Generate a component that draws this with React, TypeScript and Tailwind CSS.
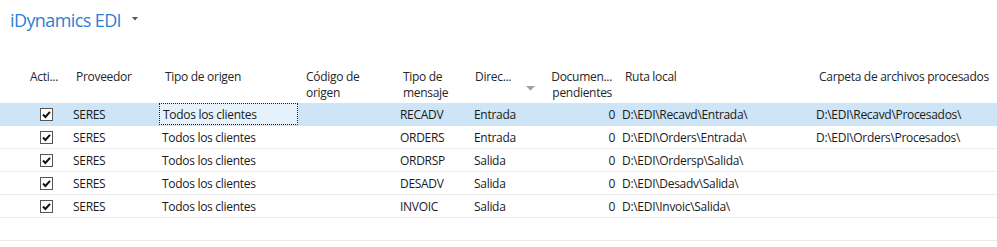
import React from "react";

const rows = [
  { msg: "RECADV", dir: "Entrada", ruta: "D:\\EDI\\Recavd\\Entrada\\", carpeta: "D:\\EDI\\Recavd\\Procesados\\" },
  { msg: "ORDERS", dir: "Entrada", ruta: "D:\\EDI\\Orders\\Entrada\\", carpeta: "D:\\EDI\\Orders\\Procesados\\" },
  { msg: "ORDRSP", dir: "Salida", ruta: "D:\\EDI\\Ordersp\\Salida\\", carpeta: "" },
  { msg: "DESADV", dir: "Salida", ruta: "D:\\EDI\\Desadv\\Salida\\", carpeta: "" },
  { msg: "INVOIC", dir: "Salida", ruta: "D:\\EDI\\Invoic\\Salida\\", carpeta: "" },
];

const grid = "grid grid-cols-[70px_89px_139px_99px_74px_76px_72px_194px_1fr]";

function Check() {
  return (
    <div className="w-[13px] h-[13px] border border-[#555] bg-white flex items-center justify-center">
      <svg width="9" height="9" viewBox="0 0 9 9">
        <path d="M1 4.5 L3.4 7 L8 1.8" fill="none" stroke="#111" strokeWidth="2" />
      </svg>
    </div>
  );
}

export default function App() {
  return (
    <div className="w-[997px] h-[247px] bg-white overflow-hidden text-[12px] tracking-[-0.3px] whitespace-nowrap text-[#1a1a1a]" style={{ fontFamily: '"Open Sans", "Noto Sans", sans-serif' }}>
      <div className="pt-[6px] pl-[10px] flex items-center h-[34px]">
        <span className="text-[18px] tracking-[-0.6px] leading-[28px] text-[#2d7fd2]">iDynamics EDI</span>
        <svg className="ml-[11px] mt-[-2px]" width="6" height="4" viewBox="0 0 6 4">
          <path d="M0 0 L6 0 L3 3.5 Z" fill="#555" />
        </svg>
      </div>
      <div className={`${grid} mt-[34px] h-[35px] pt-[1px] leading-[16px] text-[#262626]`}>
        <div className="pl-[30px]">Acti...</div>
        <div className="pl-[6px]">Proveedor</div>
        <div className="pl-[6px]">Tipo de origen</div>
        <div className="pl-[8px]">Código de<br />origen</div>
        <div className="pl-[6px]">Tipo de<br />mensaje</div>
        <div className="pl-[4px] flex">
          <span>Direc...</span>
          <svg className="ml-[15px] mt-[17px]" width="9" height="5" viewBox="0 0 9 5">
            <path d="M0 0 L9 0 L4.5 4.5 Z" fill="#a0a0a0" />
          </svg>
        </div>
        <div className="pr-[7px] text-right">Documen...<br />pendientes</div>
        <div className="pl-[6px]">Ruta local</div>
        <div className="pl-[6px]">Carpeta de archivos procesados</div>
      </div>
      <div>
        {rows.map((r, i) => {
          const sel = i === 0;
          return (
            <div
              key={i}
              className={`${grid} h-[23px] items-stretch border-b ${sel ? "bg-[#cde5f7] border-transparent" : "border-[#ebebeb]"}`}
            >
              <div className="flex items-center pl-[40px]">
                <Check />
              </div>
              <div className="flex items-center pl-[3px] pt-[1px]">SERES</div>
              <div className={`flex items-center pl-[3px] pt-[1px] ${sel ? "bg-[#e5f2fb] border border-dotted border-[#222] pl-[2px]" : ""}`}>Todos los clientes</div>
              <div></div>
              <div className="flex items-center pl-[3px] pt-[1px]">{r.msg}</div>
              <div className="flex items-center pl-[3px] pt-[1px]">{r.dir}</div>
              <div className="flex items-center justify-end pr-[4px] pt-[1px]">0</div>
              <div className="flex items-center pl-[3px] pt-[1px]">{r.ruta}</div>
              <div className="flex items-center pl-[3px] pt-[1px]">{r.carpeta}</div>
            </div>
          );
        })}
        <div className="h-[23px] border-b border-[#ebebeb]"></div>
      </div>
    </div>
  );
}
